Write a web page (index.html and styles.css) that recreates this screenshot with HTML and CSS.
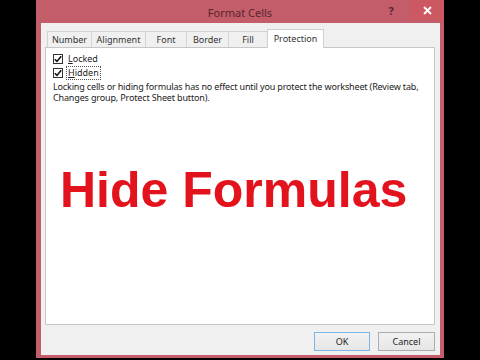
FILE: index.html
```html
<!DOCTYPE html>
<html>
<head>
<meta charset="utf-8">
<link rel="stylesheet" href="styles.css">
</head>
<body>
<div class="dialog">
  <div class="titlebar">
    <span class="spacer"></span>
    <span class="title">Format Cells</span>
    <div class="controls">
      <span class="help">?</span>
      <span class="close"><svg width="9" height="9" viewBox="0 0 9 9"><path d="M1 1 L8 8 M8 1 L1 8" stroke="#fff" stroke-width="1.8"/></svg></span>
    </div>
  </div>
  <div class="body">
    <div class="tabs">
      <span class="tab w-number">Number</span>
      <span class="tab w-align">Alignment</span>
      <span class="tab w-font">Font</span>
      <span class="tab w-border">Border</span>
      <span class="tab w-fill">Fill</span>
      <span class="tab active w-prot">Protection</span>
    </div>
    <div class="panel">
      <div class="check">
        <span class="box"><svg width="8" height="8" viewBox="0 0 8 8"><path d="M0.8 4.2 L3 6.4 L7.2 1.2" fill="none" stroke="#111" stroke-width="1.6"/></svg></span>
        <span class="label"><u>L</u>ocked</span>
      </div>
      <div class="check">
        <span class="box"><svg width="8" height="8" viewBox="0 0 8 8"><path d="M0.8 4.2 L3 6.4 L7.2 1.2" fill="none" stroke="#111" stroke-width="1.6"/></svg></span>
        <span class="label focus"><u>H</u>idden</span>
      </div>
      <p class="desc">Locking cells or hiding formulas has no effect until you protect the worksheet (Review tab, Changes group, Protect Sheet button).</p>
      <h1 class="big">Hide Formulas</h1>
    </div>
    <div class="buttons">
      <span class="btn default">OK</span>
      <span class="btn">Cancel</span>
    </div>
  </div>
</div>
</body>
</html>
```
FILE: styles.css
```css
html, body {
  margin: 0;
  padding: 0;
  background: #000;
  width: 480px;
  height: 360px;
  overflow: hidden;
}
.dialog {
  margin-left: 36px;
  width: 408px;
  height: 358px;
  background: #c25d69;
  box-sizing: border-box;
  padding: 0 4px 3px 5px;
  display: flex;
  flex-direction: column;
  font-family: "Noto Sans", "Open Sans", sans-serif;
}
.titlebar {
  height: 23px;
  margin: 0 -4px 0 -5px;
  display: grid;
  grid-template-columns: 1fr auto 1fr;
  align-items: center;
}
.title {
  font-size: 11px;
  color: #5c2530;
  padding-top: 1px;
}
.controls {
  justify-self: end;
  display: flex;
  align-items: center;
  height: 23px;
}
.help {
  font-size: 11px;
  font-weight: bold;
  color: #5c2530;
  width: 20px;
  text-align: center;
  margin-right: 10px;
  margin-bottom: 3px;
}
.close {
  width: 33px;
  height: 20px;
  margin-bottom: 3px;
  background: #cc5962;
  display: flex;
  align-items: center;
  justify-content: center;
}
.body {
  flex: 1;
  background: #f0f0f0;
  display: flex;
  flex-direction: column;
  padding: 6px 5px 0 4px;
}
.tabs {
  display: flex;
  align-items: flex-end;
  padding-left: 2px;
  height: 18px;
  position: relative;
  z-index: 1;
}
.tab {
  box-sizing: border-box;
  height: 16px;
  border: 1px solid #d4d4d4;
  border-bottom: none;
  margin-right: -1px;
  background: #f0f0f0;
  font-size: 9px;
  color: #333;
  display: flex;
  align-items: center;
  justify-content: center;
}
.tab.active {
  height: 19px;
  margin-bottom: -1px;
  background: #fff;
  border-color: #cfcfcf;
  padding-bottom: 2px;
}
.w-number { width: 45px; }
.w-align { width: 55px; }
.w-font { width: 42px; }
.w-border { width: 43px; }
.w-fill { width: 40px; }
.w-prot { width: 57px; }
.panel {
  box-sizing: border-box;
  height: 278px;
  background: #fff;
  border: 1px solid #c6c6c6;
  padding: 4px 8px 0 7px;
}
.check {
  display: flex;
  align-items: center;
  height: 14px;
  font-size: 9px;
  color: #222;
}
.box {
  box-sizing: border-box;
  width: 10px;
  height: 10px;
  border: 1px solid #333;
  background: #fff;
  display: flex;
  align-items: center;
  justify-content: center;
  margin-right: 3px;
}
.label {
  padding: 0 1px;
  line-height: 12px;
  border: 1px solid transparent;
}
.label.focus {
  border: 1px dotted #555;
}
.desc {
  margin: 2px 0 0 0;
  font-size: 9px;
  letter-spacing: -0.15px;
  line-height: 10.5px;
  color: #222;
}
.big {
  margin: 58px 0 0 7px;
  font-family: "Liberation Sans", Arial, sans-serif;
  font-weight: bold;
  font-size: 50px;
  line-height: 58px;
  color: #e3131d;
}
.buttons {
  display: flex;
  justify-content: flex-end;
  gap: 8px;
  padding: 7px 0 0 0;
}
.btn {
  box-sizing: border-box;
  width: 57px;
  height: 19px;
  border: 1px solid #adadad;
  background: linear-gradient(#f2f2f2, #e6e6e6);
  font-size: 9px;
  color: #222;
  display: flex;
  align-items: center;
  justify-content: center;
}
.btn.default {
  border-color: #7eb4e8;
  width: 56px;
}
```
